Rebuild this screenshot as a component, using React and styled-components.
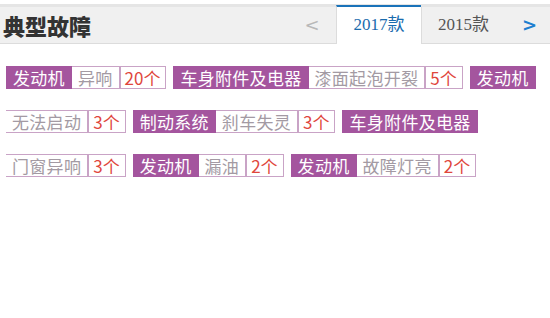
import React from "react";
import styled, { createGlobalStyle } from "styled-components";

const faults = [
  { part: "发动机", name: "异响", count: "20个" },
  { part: "车身附件及电器", name: "漆面起泡开裂", count: "5个" },
  { part: "发动机", name: "无法启动", count: "3个" },
  { part: "制动系统", name: "刹车失灵", count: "3个" },
  { part: "车身附件及电器", name: "门窗异响", count: "3个" },
  { part: "发动机", name: "漏油", count: "2个" },
  { part: "发动机", name: "故障灯亮", count: "2个" },
];

function App() {
  return (
    <>
      <GlobalStyle />
      <Wrapper>
        <Header>
          <Title>典型故障</Title>
          <Tabs>
            <Arrow>&lt;</Arrow>
            <Tab active>2017款</Tab>
            <Tab>2015款</Tab>
            <Arrow next>&gt;</Arrow>
          </Tabs>
        </Header>
        <TagList>
          {faults.map((f, i) => (
            <React.Fragment key={i}>
              <Part first={i > 0}>{f.part}</Part>
              <Name>{f.name}</Name>
              <Count>{f.count}</Count>
            </React.Fragment>
          ))}
        </TagList>
      </Wrapper>
    </>
  );
}

const GlobalStyle = createGlobalStyle`
  body {
    margin: 0;
    background: #fff;
    font-family: "Noto Sans CJK SC", "Noto Sans", sans-serif;
  }
`;

const Wrapper = styled.div`
  width: 550px;
  padding-top: 4px;
`;

const Header = styled.div`
  display: flex;
  align-items: stretch;
  justify-content: space-between;
  height: 36px;
  background: #f0f0f0;
  border-top: 3px solid #e5e5e5;
  border-bottom: 1px solid #dcdcdc;
`;

const Title = styled.h2`
  margin: 0;
  padding-left: 3px;
  font-size: 22px;
  font-weight: 900;
  color: #333;
  line-height: 36px;
`;

const Tabs = styled.div`
  display: flex;
  align-items: stretch;
`;

const Arrow = styled.span`
  width: ${(p) => (p.next ? "45px" : "24px")};
  margin-right: ${(p) => (p.next ? "0" : "13px")};
  padding-left: ${(p) => (p.next ? "4px" : "2px")};
  box-sizing: border-box;
  text-align: center;
  font-family: "DejaVu Sans", sans-serif;
  font-size: 18px;
  font-weight: ${(p) => (p.next ? "bold" : "normal")};
  line-height: 36px;
  color: ${(p) => (p.next ? "#1e7fd0" : "#b8b8b8")};
`;

const Tab = styled.span`
  width: ${(p) => (p.active ? "84px" : "83px")};
  margin-top: ${(p) => (p.active ? "-2px" : "0")};
  margin-bottom: ${(p) => (p.active ? "-1px" : "0")};
  border-left: 1px solid #dcdcdc;
  border-top: ${(p) => (p.active ? "2px solid #1a72b9" : "none")};
  background: ${(p) => (p.active ? "#fff" : "transparent")};
  text-align: center;
  font-family: "Liberation Serif", "Noto Sans CJK SC", serif;
  font-size: 17px;
  line-height: 36px;
  color: ${(p) => (p.active ? "#1a6cae" : "#555")};
`;

const TagList = styled.div`
  display: flex;
  flex-wrap: wrap;
  row-gap: 21px;
  padding: 22px 4px 0 6px;
`;

const Segment = styled.span`
  height: 21px;
  padding: 0 6px;
  font-size: 17px;
  letter-spacing: 0.3px;
  line-height: 21px;
  white-space: nowrap;
  border: 1px solid #c9a3c6;
`;

const Part = styled(Segment)`
  margin-left: ${(p) => (p.first ? "7px" : "0")};
  background: #a4559e;
  border-color: #a4559e;
  color: #fff;
`;

const Name = styled(Segment)`
  border-left: none;
  color: #a39aa3;
`;

const Count = styled(Segment)`
  border-left: none;
  padding: 0 5px;
  letter-spacing: 0;
  color: #e0463c;
  box-shadow: inset 1px 0 0 #c9a3c6;
`;

export default App;
